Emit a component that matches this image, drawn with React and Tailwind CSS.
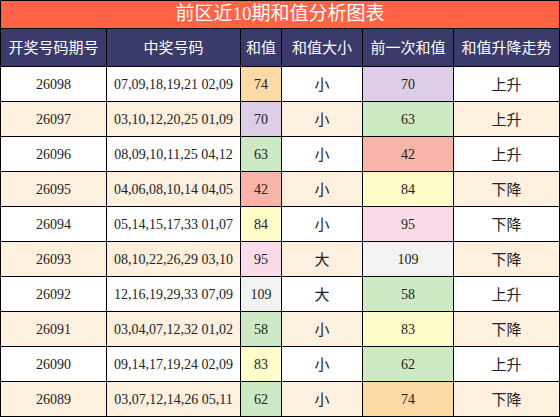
import React from "react";

const rows = [
  ["26098", "07,09,18,19,21 02,09", 74, "小", 70, "上升"],
  ["26097", "03,10,12,20,25 01,09", 70, "小", 63, "上升"],
  ["26096", "08,09,10,11,25 04,12", 63, "小", 42, "上升"],
  ["26095", "04,06,08,10,14 04,05", 42, "小", 84, "下降"],
  ["26094", "05,14,15,17,33 01,07", 84, "小", 95, "下降"],
  ["26093", "08,10,22,26,29 03,10", 95, "大", 109, "下降"],
  ["26092", "12,16,19,29,33 07,09", 109, "大", 58, "上升"],
  ["26091", "03,04,07,12,32 01,02", 58, "小", 83, "下降"],
  ["26090", "09,14,17,19,24 02,09", 83, "小", 62, "上升"],
  ["26089", "03,07,12,14,26 05,11", 62, "小", 74, "下降"],
];

const colorFor = {
  74: "bg-[#fdd9a5]",
  70: "bg-[#ddcde6]",
  63: "bg-[#cdeac5]",
  42: "bg-[#f9b4aa]",
  84: "bg-[#fffdca]",
  95: "bg-[#fadbe9]",
  109: "bg-[#f2f2f2]",
  58: "bg-[#cdeac5]",
  83: "bg-[#fffdca]",
  62: "bg-[#cdeac5]",
};

const cjk = "font-['Noto_Sans_CJK_SC',sans-serif]";
const num = "font-['Liberation_Serif','Noto_Sans_CJK_SC',serif]";

export default function App() {
  return (
    <div className="w-[560px] h-[417px] bg-white">
      <div className="grid grid-cols-[105px_133px_40px_80px_90px_105px] gap-px bg-black p-px text-[#222]">
        <div className={`col-span-6 h-[27px] bg-[#ff6347] text-white text-[19px] flex items-center justify-center ${num}`}>
          前区近10期和值分析图表
        </div>
        {["开奖号码期号", "中奖号码", "和值", "和值大小", "前一次和值", "和值升降走势"].map((h) => (
          <div key={h} className={`h-[37px] bg-[#3b3b6b] text-white text-[15px] flex items-center justify-center ${cjk}`}>
            {h}
          </div>
        ))}
        {rows.map((r, i) => {
          const bg = i % 2 === 0 ? "bg-white" : "bg-[#fef0de]";
          return (
            <React.Fragment key={r[0]}>
              <div className={`h-[34px] ${bg} ${num} text-[14px] flex items-center justify-center`}>{r[0]}</div>
              <div className={`h-[34px] ${bg} ${num} text-[14px] flex items-center justify-center`}>{r[1]}</div>
              <div className={`h-[34px] ${colorFor[r[2]]} ${num} text-[14px] flex items-center justify-center`}>{r[2]}</div>
              <div className={`h-[34px] ${bg} ${cjk} text-[15px] flex items-center justify-center`}>{r[3]}</div>
              <div className={`h-[34px] ${colorFor[r[4]]} ${num} text-[14px] flex items-center justify-center`}>{r[4]}</div>
              <div className={`h-[34px] ${bg} ${cjk} text-[15px] flex items-center justify-center`}>{r[5]}</div>
            </React.Fragment>
          );
        })}
      </div>
    </div>
  );
}
